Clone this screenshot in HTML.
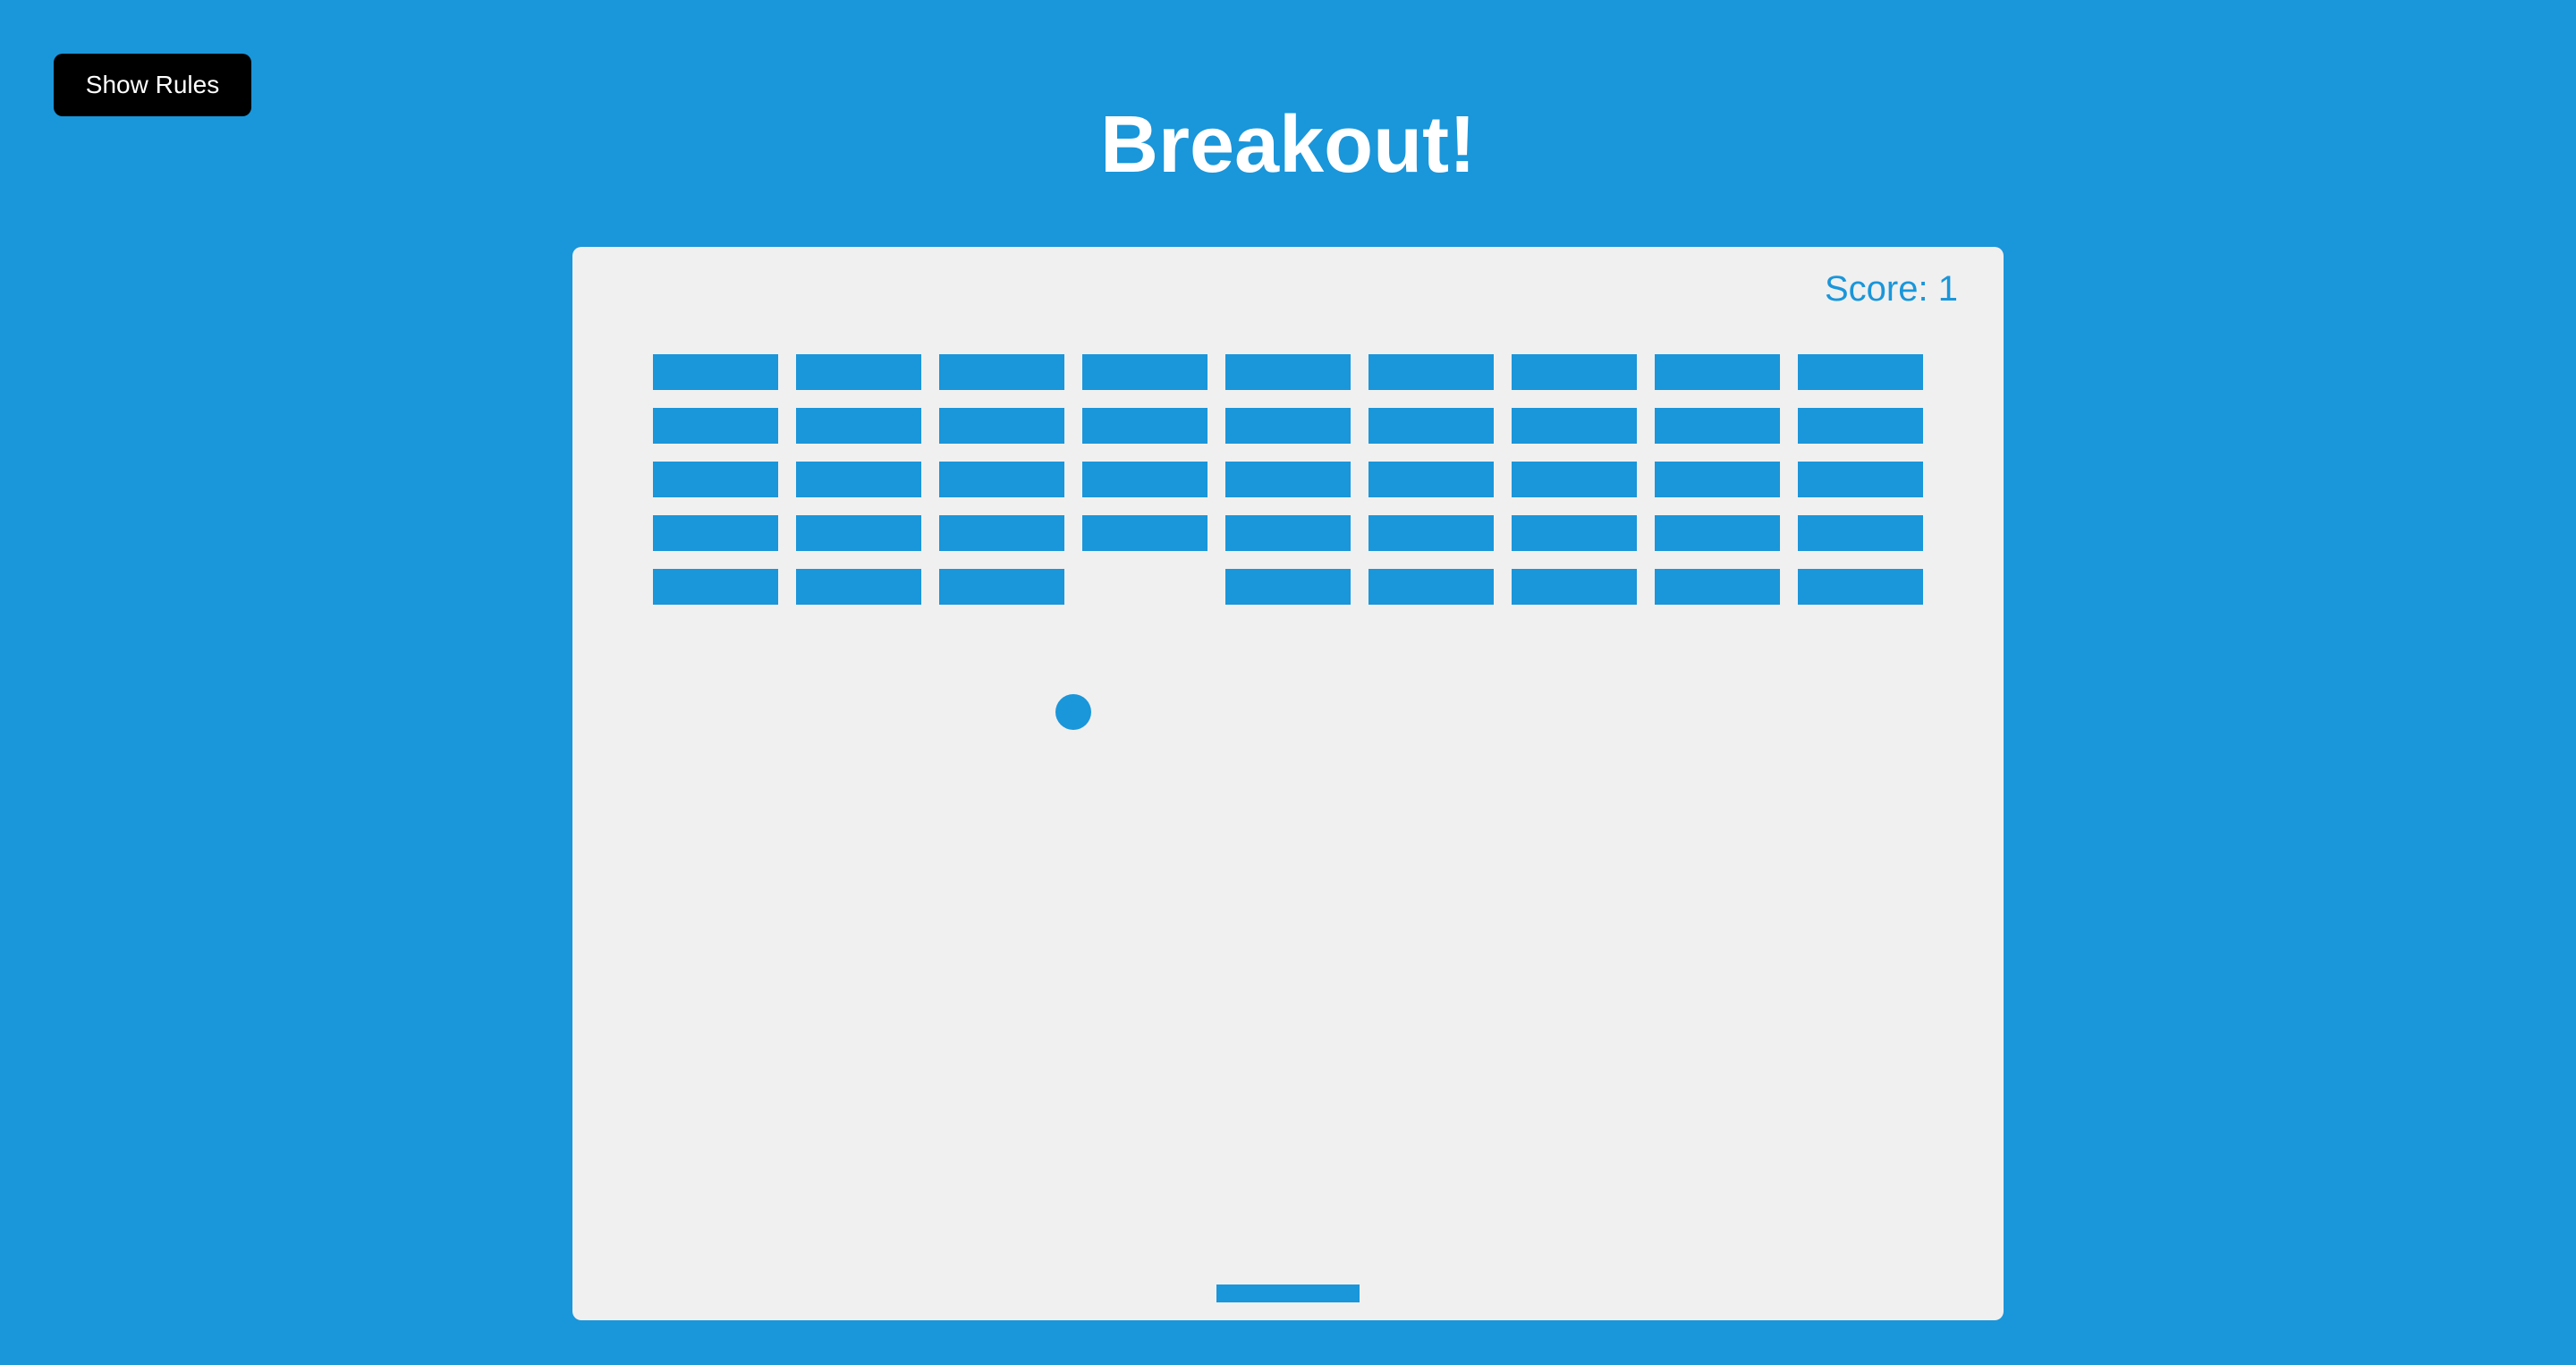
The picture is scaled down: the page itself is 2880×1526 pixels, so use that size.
<!DOCTYPE html>
<html><head><meta charset="utf-8">
<style>
html,body{margin:0;padding:0;width:2880px;height:1526px;overflow:hidden;background:#1a96da;font-family:"Liberation Sans",Arial,sans-serif;}
.btn{position:absolute;left:60px;top:60px;width:221px;height:70px;background:#000;color:#fff;border-radius:10px;font-size:28px;line-height:70px;text-align:center;}
h1{position:absolute;left:0;top:117px;width:2880px;margin:0;text-align:center;color:#fff;font-size:90px;line-height:90px;font-weight:bold;letter-spacing:0;}
.board{position:absolute;left:640px;top:276px;width:1600px;height:1200px;border-radius:10px;overflow:hidden;background:#f0f0f0;}
svg{display:block}
</style></head><body>
<div class="btn">Show Rules</div>
<h1>Breakout!</h1>
<div class="board">
<svg width="1600" height="1200" viewBox="0 0 800 600">
<g fill="#1a96da">
<rect x="45" y="60" width="70" height="20"/><rect x="125" y="60" width="70" height="20"/><rect x="205" y="60" width="70" height="20"/><rect x="285" y="60" width="70" height="20"/><rect x="365" y="60" width="70" height="20"/><rect x="445" y="60" width="70" height="20"/><rect x="525" y="60" width="70" height="20"/><rect x="605" y="60" width="70" height="20"/><rect x="685" y="60" width="70" height="20"/>
<rect x="45" y="90" width="70" height="20"/><rect x="125" y="90" width="70" height="20"/><rect x="205" y="90" width="70" height="20"/><rect x="285" y="90" width="70" height="20"/><rect x="365" y="90" width="70" height="20"/><rect x="445" y="90" width="70" height="20"/><rect x="525" y="90" width="70" height="20"/><rect x="605" y="90" width="70" height="20"/><rect x="685" y="90" width="70" height="20"/>
<rect x="45" y="120" width="70" height="20"/><rect x="125" y="120" width="70" height="20"/><rect x="205" y="120" width="70" height="20"/><rect x="285" y="120" width="70" height="20"/><rect x="365" y="120" width="70" height="20"/><rect x="445" y="120" width="70" height="20"/><rect x="525" y="120" width="70" height="20"/><rect x="605" y="120" width="70" height="20"/><rect x="685" y="120" width="70" height="20"/>
<rect x="45" y="150" width="70" height="20"/><rect x="125" y="150" width="70" height="20"/><rect x="205" y="150" width="70" height="20"/><rect x="285" y="150" width="70" height="20"/><rect x="365" y="150" width="70" height="20"/><rect x="445" y="150" width="70" height="20"/><rect x="525" y="150" width="70" height="20"/><rect x="605" y="150" width="70" height="20"/><rect x="685" y="150" width="70" height="20"/>
<rect x="45" y="180" width="70" height="20"/><rect x="125" y="180" width="70" height="20"/><rect x="205" y="180" width="70" height="20"/><rect x="365" y="180" width="70" height="20"/><rect x="445" y="180" width="70" height="20"/><rect x="525" y="180" width="70" height="20"/><rect x="605" y="180" width="70" height="20"/><rect x="685" y="180" width="70" height="20"/>
<circle cx="280" cy="260" r="10"/>
<rect x="360" y="580" width="80" height="10"/>
<text x="700" y="30" font-family="Liberation Sans, Arial, sans-serif" font-size="20">Score: 1</text>
</g>
</svg>
</div>
</body></html>
